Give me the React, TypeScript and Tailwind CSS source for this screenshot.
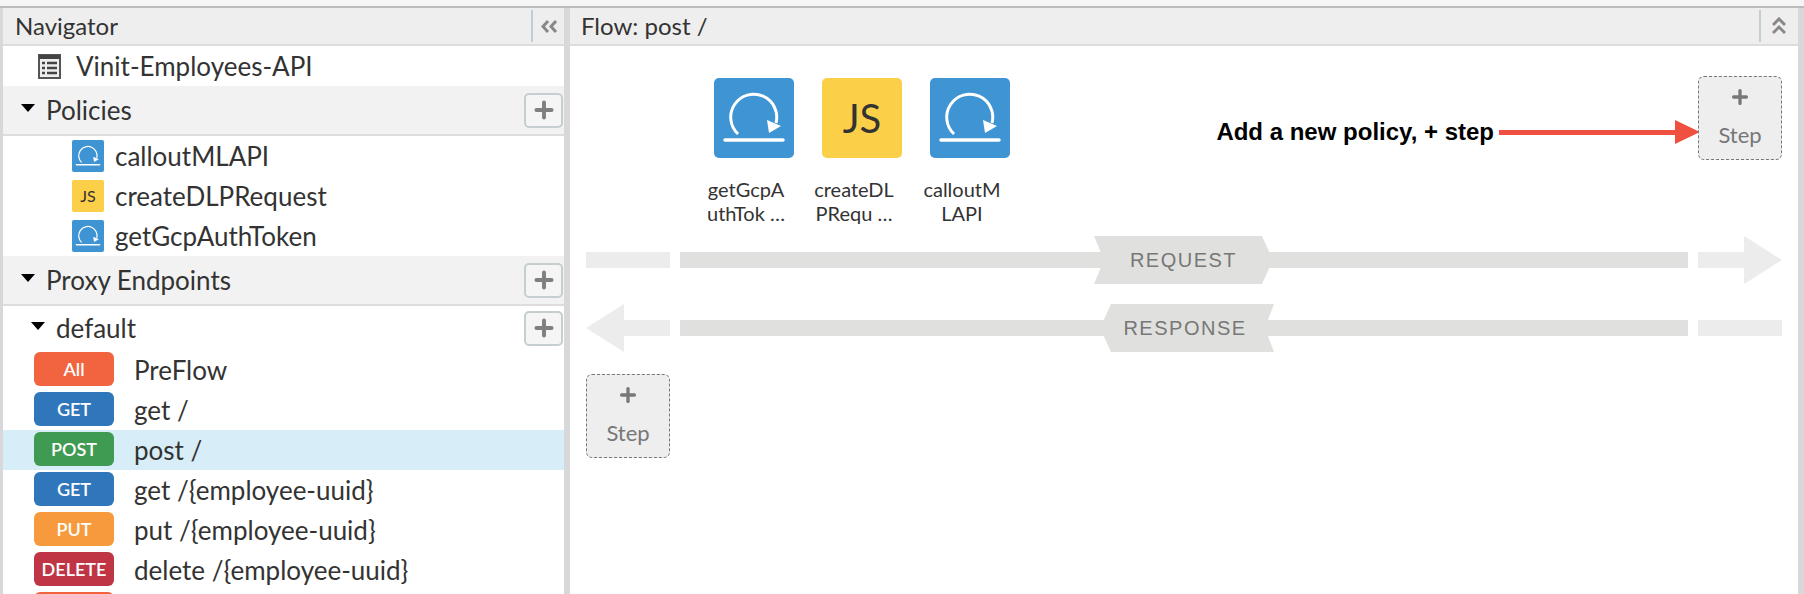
import { Plus } from "lucide-react";

const lato = "font-['Lato','Liberation_Sans',sans-serif]";

const POLICIES = [
  { name: "calloutMLAPI", kind: "callout" },
  { name: "createDLPRequest", kind: "js" },
  { name: "getGcpAuthToken", kind: "callout" },
];

const FLOW_STEPS = [
  { kind: "callout", lines: ["getGcpA", "uthTok …"] },
  { kind: "js", lines: ["createDL", "PRequ …"] },
  { kind: "callout", lines: ["calloutM", "LAPI"] },
];

const FLOWS = [
  { method: "All", label: "PreFlow", color: "bg-[#f26440]" },
  { method: "GET", label: "get /", color: "bg-[#2f76bb]" },
  { method: "POST", label: "post /", color: "bg-[#3f9b52]", active: true },
  { method: "GET", label: "get /{employee-uuid}", color: "bg-[#2f76bb]" },
  { method: "PUT", label: "put /{employee-uuid}", color: "bg-[#f79a3e]" },
  { method: "DELETE", label: "delete /{employee-uuid}", color: "bg-[#bf3545]" },
  { method: "", label: "", color: "bg-[#f26440]" },
];

function PolicyIcon({ kind, size }: { kind: string; size: number }) {
  return (
    <svg width={size} height={size} viewBox="0 0 80 80" className="shrink-0">
      <rect width="80" height="80" rx="5" fill={kind === "js" ? "#fbcf47" : "#3f95d4"} />
      {kind === "js" ? (
        <text x="40" y="55" textAnchor="middle" fontSize="40" fontFamily="Lato, sans-serif" fill="#333">JS</text>
      ) : (
        <g fill="none" stroke="#fff">
          <path d="M24 56 A23 23 0 1 1 62 45" strokeWidth="3" />
          <path d="M53 42 L67 48 L55 55 Z" fill="#fff" stroke="none" />
          <path d="M11 62 H69" strokeWidth="3.5" strokeLinecap="round" />
        </g>
      )}
    </svg>
  );
}

function Caret() {
  return <span className="-mt-[5px] h-0 w-0 border-x-[7px] border-t-[8px] border-x-transparent border-t-black" />;
}

function AddButton() {
  return (
    <button className="flex h-[35px] w-[39px] items-center justify-center rounded-[5px] border-2 border-[#c6ced2] bg-[#f5f5f5] text-[#808080]">
      <Plus size={26} strokeWidth={3.6} />
    </button>
  );
}

function StepBox() {
  return (
    <div className="flex h-[84px] w-[84px] shrink-0 flex-col items-center rounded-[6px] border border-dashed border-[#777] bg-[#eee] text-[#777]">
      <Plus size={22} strokeWidth={3.6} className="mt-[9px]" />
      <span className="mt-[15px] text-[22px] leading-6">Step</span>
    </div>
  );
}

function SectionHeader({ title }: { title: string }) {
  return (
    <div className="flex h-[50px] items-center border-b-2 border-[#ddd] bg-[#f2f2f2] pl-[18px] pr-[1px] text-[26px]">
      <Caret />
      <span className="ml-[11px] flex-1">{title}</span>
      <AddButton />
    </div>
  );
}

export default function App() {
  return (
    <div className={`flex h-[594px] w-[1804px] flex-col overflow-hidden bg-white text-[#333] ${lato}`}>
      <div className="h-[8px] shrink-0 border-b-2 border-[#bbb] bg-[#f5f5f5]" />
      <div className="flex min-h-0 flex-1">
        {/* Navigator */}
        <aside className="w-[570px] shrink-0 overflow-hidden border-l-[3px] border-r-[6px] border-[#d8d8d8]">
          <div className="flex h-[38px] items-center border-b-2 border-[#ddd] bg-[#eee] pl-[12px] text-[24px]">
            <span className="flex-1">Navigator</span>
            <div className="flex h-[32px] w-[33px] items-center justify-center border-l-2 border-[#c0cdd5] pl-[1px]">
              <svg width="17" height="13" viewBox="0 0 17 13" fill="none" stroke="#888" strokeWidth="3">
                <path d="M7 1 L2 6.5 L7 12M15 1 L10 6.5 L15 12" />
              </svg>
            </div>
          </div>
          <div className="flex h-[40px] items-center pl-[35px] text-[26px]">
            <svg width="23" height="25" viewBox="0 0 23 25" className="shrink-0">
              <rect x="1" y="1" width="21" height="23" fill="#eee" stroke="#555" strokeWidth="2" />
              <rect x="1" y="1" width="21" height="4" fill="#444" />
              <path d="M4 9h3M9 9h10M4 14h3M9 14h10M4 19h3M9 19h10" stroke="#444" strokeWidth="2.5" />
            </svg>
            <span className="ml-[15px]">Vinit-Employees-API</span>
          </div>
          <SectionHeader title="Policies" />
          {POLICIES.map((p) => (
            <div key={p.name} className="flex h-[40px] items-center pl-[69px] text-[26px]">
              <PolicyIcon kind={p.kind} size={32} />
              <span className="ml-[11px]">{p.name}</span>
            </div>
          ))}
          <SectionHeader title="Proxy Endpoints" />
          <div className="flex h-[44px] items-center pl-[28px] pr-[1px] text-[26px]">
            <Caret />
            <span className="ml-[11px] flex-1 pt-[1px]">default</span>
            <AddButton />
          </div>
          {FLOWS.map((f, i) => (
            <div key={i} className={`flex h-[40px] shrink-0 items-center pl-[31px] text-[26px] ${f.active ? "bg-[#d7eef8]" : ""}`}>
              <span className={`-mt-[2px] flex h-[34px] w-[80px] shrink-0 items-center justify-center rounded-[6px] text-[18px] font-semibold text-white ${f.color}`}>
                {f.method}
              </span>
              <span className="ml-[20px]">{f.label}</span>
            </div>
          ))}
        </aside>

        {/* Flow canvas */}
        <main className="min-w-0 flex-1 border-r-[6px] border-[#d8d8d8]">
          <div className="flex h-[38px] items-center border-b-2 border-[#ddd] bg-[#eee] pl-[11px] text-[24px]">
            <span className="flex-1">Flow: post /</span>
            <div className="flex h-[32px] w-[39px] flex-col items-center justify-center border-l-2 border-[#c0cdd5] pr-[1px]">
              <svg width="14" height="18" viewBox="0 0 14 18" fill="none" stroke="#888" strokeWidth="3">
                <path d="M1 8 L7 2 L13 8M1 16 L7 10 L13 16" />
              </svg>
            </div>
          </div>
          <div className="mt-[30px] flex h-[84px] pl-[144px] pr-[16px]">
            {FLOW_STEPS.map((s, i) => (
              <div key={i} className="mr-[28px] pt-[2px]">
                <PolicyIcon kind={s.kind} size={80} />
              </div>
            ))}
            <div className="flex flex-1 items-start justify-end">
              <div className="flex items-center pt-[41px]">
                <span className="font-['Liberation_Sans',sans-serif] text-[24px] font-bold leading-[30px] text-black">Add a new policy, + step</span>
                <div className="ml-[5px] h-[5px] w-[176px] bg-[#ef5040]" />
                <div className="-mr-[2px] h-0 w-0 border-y-[12px] border-l-[25px] border-y-transparent border-l-[#ef5040]" />
              </div>
              <StepBox />
            </div>
          </div>
          <div className="mt-[17px] flex pl-[134px]">
            {FLOW_STEPS.map((s, i) => (
              <div key={i} className="mr-[24px] w-[84px] text-center text-[20px] leading-[24px]">
                {s.lines.map((l) => <div key={l}>{l}</div>)}
              </div>
            ))}
          </div>
          <div className="mt-[11px] flex flex-col gap-[20px] px-[16px] font-['Liberation_Sans',sans-serif]">
            <div className="flex h-[48px] items-center">
              <div className="h-4 w-[84px] bg-[#ececec]" />
              <div className="relative ml-[10px] h-4 w-[1008px] bg-[#e0e0de]">
                <div className="absolute left-[414px] top-[-16px] flex h-[48px] w-[179px] items-center justify-center bg-[#e0e0de] text-[20px] tracking-[1.5px] text-[#777] [clip-path:polygon(0_0,168px_0,179px_50%,168px_100%,0_100%,10px_50%)]">REQUEST</div>
              </div>
              <div className="ml-[10px] h-4 w-[46px] bg-[#ececec]" />
              <div className="h-0 w-0 border-y-[24px] border-l-[38px] border-y-transparent border-l-[#ececec]" />
            </div>
            <div className="flex h-[48px] items-center">
              <div className="h-0 w-0 border-y-[24px] border-r-[38px] border-y-transparent border-r-[#ececec]" />
              <div className="h-4 w-[46px] bg-[#ececec]" />
              <div className="relative ml-[10px] h-4 w-[1008px] bg-[#e0e0de]">
                <div className="absolute left-[420px] top-[-16px] flex h-[48px] w-[174px] items-center justify-center bg-[#e0e0de] pr-[4px] text-[20px] tracking-[1.5px] text-[#777] [clip-path:polygon(11px_0,174px_0,165px_50%,174px_100%,11px_100%,0_50%)]">RESPONSE</div>
              </div>
              <div className="ml-[10px] h-4 w-[84px] bg-[#ececec]" />
            </div>
          </div>
          <div className="mt-[22px] pl-[16px]">
            <StepBox />
          </div>
        </main>
      </div>
    </div>
  );
}
